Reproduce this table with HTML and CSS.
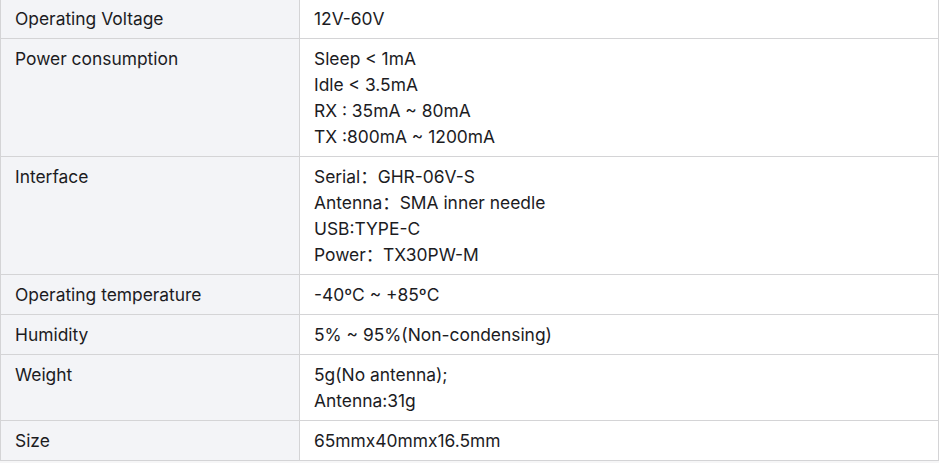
FILE: index.html
```html
<!DOCTYPE html>
<html lang="en">
<head>
<meta charset="utf-8">
<title>Specifications</title>
<link rel="stylesheet" href="styles.css">
</head>
<body>
<div class="spec">
  <div class="row"><div class="key">Operating Voltage</div><div class="val">12V-60V</div></div>
  <div class="row"><div class="key">Power consumption</div><div class="val">Sleep &lt; 1mA<br>Idle &lt; 3.5mA<br>RX : 35mA ~ 80mA<br>TX :800mA ~ 1200mA</div></div>
  <div class="row"><div class="key">Interface</div><div class="val">Serial：GHR-06V-S<br>Antenna：SMA inner needle<br>USB:TYPE-C<br>Power：TX30PW-M</div></div>
  <div class="row"><div class="key">Operating temperature</div><div class="val">-40ºC ~ +85ºC</div></div>
  <div class="row"><div class="key">Humidity</div><div class="val">5% ~ 95%(Non-condensing)</div></div>
  <div class="row"><div class="key">Weight</div><div class="val">5g(No antenna);<br>Antenna:31g</div></div>
  <div class="row"><div class="key">Size</div><div class="val">65mmx40mmx16.5mm</div></div>
</div>
</body>
</html>
```
FILE: styles.css
```css
html, body {
  margin: 0;
  padding: 0;
}
body {
  background: #f6f6f7;
  font-family: Inter, "Noto Sans CJK SC", sans-serif;
  font-size: 17.4px;
  color: #1c1c1f;
}
.spec {
  margin-top: -1px;
  width: 939px;
  box-sizing: border-box;
  border-left: 1px solid #d4d4d6;
}
.row {
  display: grid;
  grid-template-columns: 299px 639px;
}
.key, .val {
  padding: 6.5px 14px;
  line-height: 26px;
  border-right: 1px solid #d4d4d6;
  border-bottom: 1px solid #d4d4d6;
}
.key {
  background: #f3f4f7;
}
.val {
  background: #fff;
}
```
